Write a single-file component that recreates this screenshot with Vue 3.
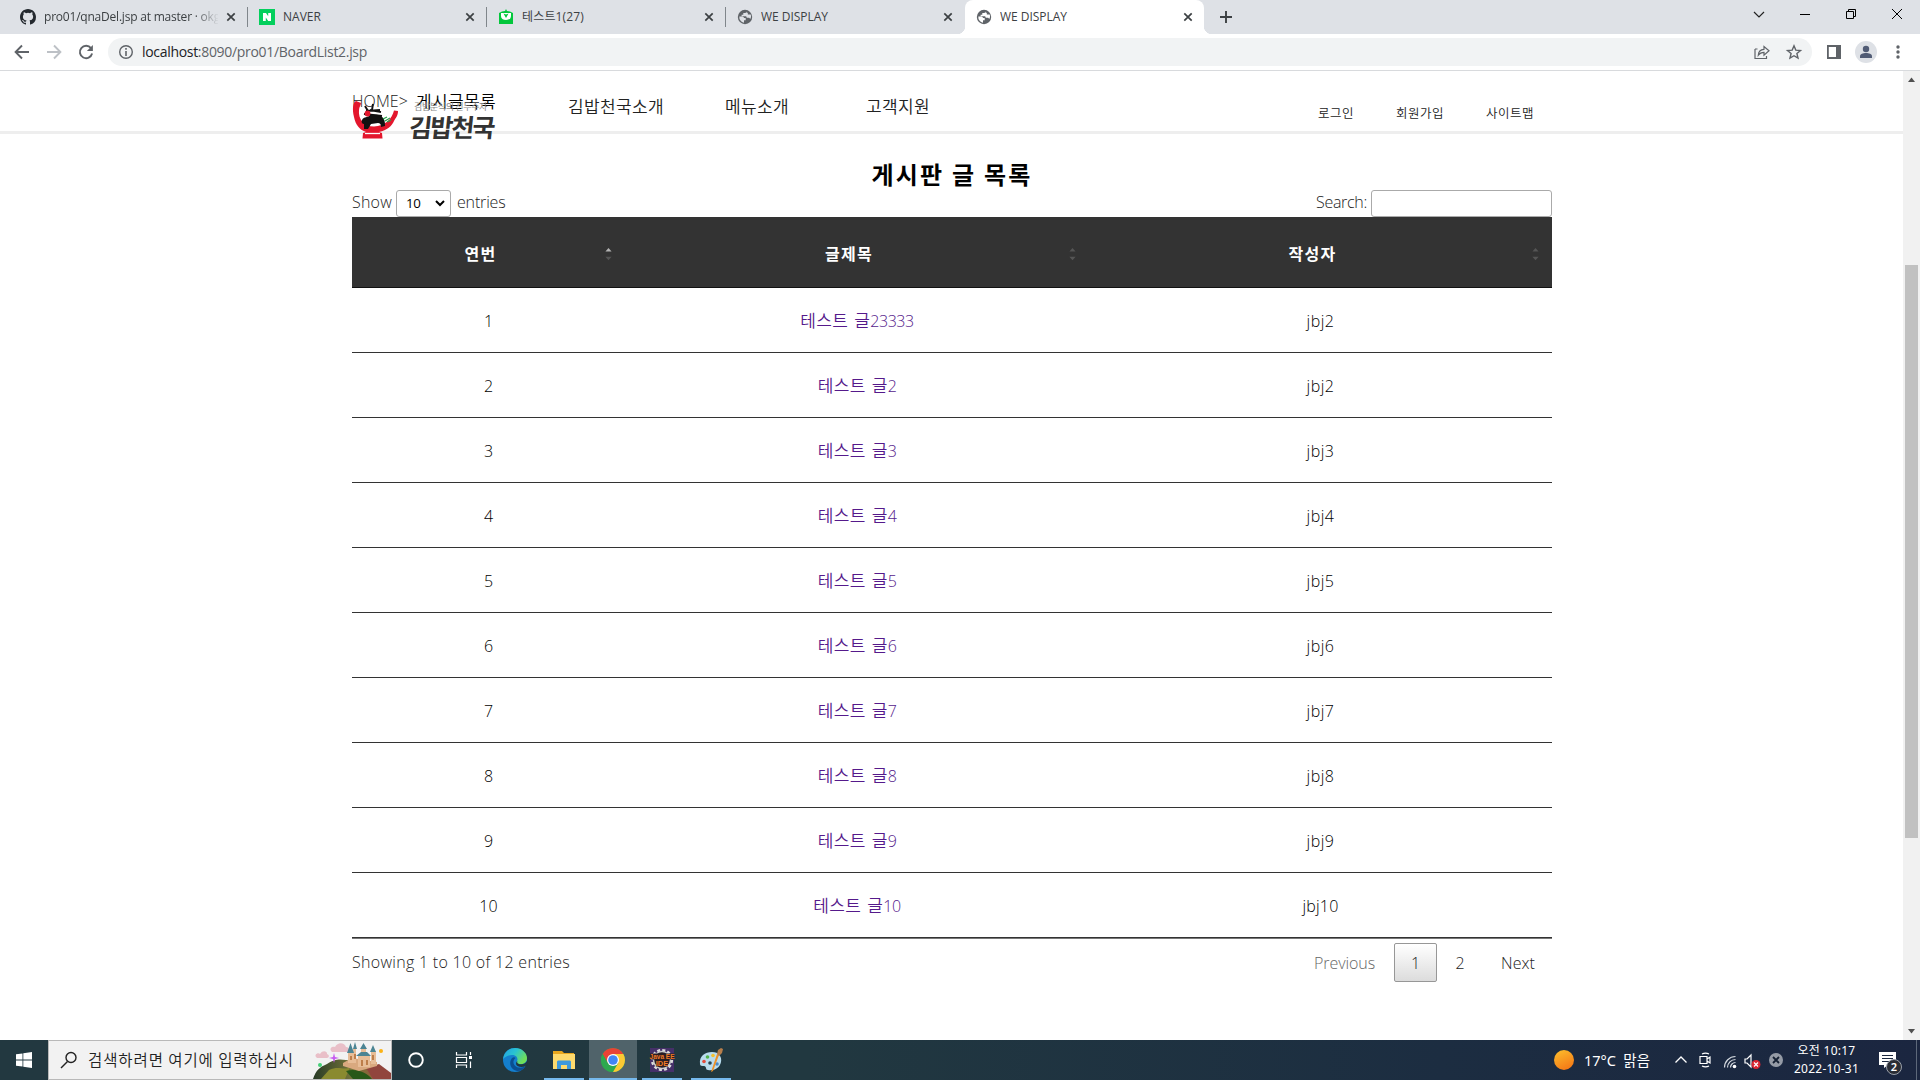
<script setup>
const tabs = [
  { icon: 'github', title: 'pro01/qnaDel.jsp at master · okg', w: 176, fade: true },
  { icon: 'naver', title: 'NAVER', w: 38 },
  { icon: 'mail', title: '테스트1(27)', w: 62 },
  { icon: 'globe', title: 'WE DISPLAY', w: 67 },
  { icon: 'globe', title: 'WE DISPLAY', w: 67, active: true },
]

const rows = [
  { no: 1, title: '23333', writer: 'jbj2' },
  { no: 2, title: '2', writer: 'jbj2' },
  { no: 3, title: '3', writer: 'jbj3' },
  { no: 4, title: '4', writer: 'jbj4' },
  { no: 5, title: '5', writer: 'jbj5' },
  { no: 6, title: '6', writer: 'jbj6' },
  { no: 7, title: '7', writer: 'jbj7' },
  { no: 8, title: '8', writer: 'jbj8' },
  { no: 9, title: '9', writer: 'jbj9' },
  { no: 10, title: '10', writer: 'jbj10' },
]

// Spreads or tightens the letters of a label so that it takes the given width.
const vFit = {
  mounted(el, { value }) {
    const range = document.createRange()
    range.selectNodeContents(el)
    const natural = range.getBoundingClientRect().width
    const count = el.textContent.length
    el.style.letterSpacing = `${(value - natural) / count}px`
  },
}
</script>

<template>
  <div class="screen">
    <div class="tabstrip">
      <div v-for="(t, i) in tabs" :key="i" class="tab" :class="{ active: t.active, next: i === 3 }">
        <svg v-if="t.icon === 'github'" class="fav" viewBox="0 0 16 16"><path fill="#24292f" d="M8 0C3.58 0 0 3.58 0 8c0 3.54 2.29 6.53 5.47 7.59.4.07.55-.17.55-.38 0-.19-.01-.82-.01-1.49-2.01.37-2.53-.49-2.69-.94-.09-.23-.48-.94-.82-1.13-.28-.15-.68-.52-.01-.53.63-.01 1.08.58 1.23.82.72 1.21 1.87.87 2.33.66.07-.52.28-.87.51-1.07-1.78-.2-3.64-.89-3.64-3.95 0-.87.31-1.59.82-2.15-.08-.2-.36-1.02.08-2.12 0 0 .67-.21 2.2.82a7.6 7.6 0 0 1 4 0c1.53-1.04 2.2-.82 2.2-.82.44 1.1.16 1.92.08 2.12.51.56.82 1.27.82 2.15 0 3.07-1.87 3.75-3.65 3.95.29.25.54.73.54 1.48 0 1.07-.01 1.93-.01 2.2 0 .21.15.46.55.38A8 8 0 0 0 16 8c0-4.42-3.58-8-8-8z" /></svg>
        <svg v-else-if="t.icon === 'naver'" class="fav" viewBox="0 0 16 16"><path fill="#03cf5d" d="M0 0h16v16H0z" /><path fill="#fff" d="M4 4h3l2.200 3.300V4H12v8H9.200L6.800 8.600V12H4z" /></svg>
        <svg v-else-if="t.icon === 'mail'" class="fav" viewBox="0 0 16 16"><path fill="#03c73c" d="M1 4l3-1.500L7 2l1-2 1 2 3 .5L15 4v11H1z" /><path fill="#fff" d="M3 4h10v3c0 2.500-2 4-5 4S3 9.500 3 7z" /><path fill="#03c73c" d="M5.500 4.500L8 9l2.500-4.500L8 5.500z" /></svg>
        <svg v-else class="fav" viewBox="0 0 16 16"><circle cx="8" cy="8" r="7.200" fill="#5f6368" /><path class="land" d="M2.300 7.400h2.900c1 0 1.800.8 1.800 1.700h1.700v2.200H7v2.500A6 6 0 0 1 2.300 7.400zM9.800 2.300c-.1 1-.8 1.700-1.700 1.700H6.300v1.800H4.600v1.500h3.800c1 0 1.300.7 1.300 1.500h1.800c.9 0 1.500.6 1.700 1.300.9-1.200 1.100-2.900.5-4.600h-2.900V3.800H9.800z" /></svg>
        <span class="title" :class="{ fade: t.fade }"><span v-fit="t.w">{{ t.title }}</span></span>
        <svg class="x" viewBox="0 0 10 10"><path d="M1.300 1.300l7.400 7.400M8.700 1.300L1.300 8.700" stroke="#3c4043" stroke-width="1.700" /></svg>
      </div>
      <svg class="plus" viewBox="0 0 12 12"><path d="M6 0v12M0 6h12" stroke="#3c4043" stroke-width="1.900" /></svg>
      <div class="winctl">
        <svg viewBox="0 0 12 12"><path d="M1 4l5 5 5-5" fill="none" stroke="#222" stroke-width="1.200" /></svg>
        <svg viewBox="0 0 12 12"><path d="M1 6.500h10" stroke="#000" /></svg>
        <svg viewBox="0 0 12 12"><path d="M1.500 3.500h7v7h-7zM3.500 3.500v-2h7v7h-2" fill="none" stroke="#000" /></svg>
        <svg viewBox="0 0 12 12"><path d="M1 1l10 10M11 1L1 11" stroke="#000" /></svg>
      </div>
    </div>

    <div class="toolbar">
      <svg class="tb" viewBox="0 0 16 16"><path d="M15 8H2M8 1.500L1.600 8 8 14.500" fill="none" stroke="#5f6368" stroke-width="1.900" /></svg>
      <svg class="tb" viewBox="0 0 16 16"><path d="M1 8h13M8 1.500L14.400 8 8 14.500" fill="none" stroke="#bdc1c6" stroke-width="1.900" /></svg>
      <svg class="tb" viewBox="0 0 16 16"><path d="M13 4.200A6.200 6.200 0 1 0 14.100 9.500" fill="none" stroke="#5f6368" stroke-width="1.900" /><path d="M14.900 1v6h-6z" fill="#5f6368" /></svg>
      <div class="omni">
        <svg class="info" viewBox="0 0 16 16"><circle cx="8" cy="8" r="6.300" fill="none" stroke="#5f6368" stroke-width="1.400" /><path d="M8 7v5M8 4v1.700" stroke="#5f6368" stroke-width="1.600" /></svg>
        <span v-fit="225" class="url"><b>localhost</b>:8090/pro01/BoardList2.jsp</span>
        <svg class="share" viewBox="0 0 16 16"><path d="M1 5v9.500h11.500V12M1 5h2.500" fill="none" stroke="#5f6368" stroke-width="1.200" /><path d="M4.300 11.200c.2-4 2.300-5.700 5.700-5.900V2.500l5 4.300-5 4.300V8.300c-2.500 0-4.200.7-5.700 2.900z" fill="none" stroke="#5f6368" stroke-width="1.200" /></svg>
        <svg class="star" viewBox="0 0 16 16"><path d="M8 1.800l1.800 4.300 4.700.4-3.600 3 1.100 4.600L8 11.700l-4 2.400 1.100-4.600-3.600-3 4.700-.4z" fill="none" stroke="#5f6368" stroke-width="1.400" /></svg>
      </div>
      <svg class="panel" viewBox="0 0 14 14"><path fill="#5f6368" fill-rule="evenodd" d="M0 0h14v14H0zM1.800 2v10H9V2z" /></svg>
      <svg class="avatar" viewBox="0 0 22 22"><circle cx="11" cy="11" r="11" fill="#dee1e6" /><circle cx="11" cy="8" r="3.200" fill="#515c75" /><path d="M5 17v-1.800c0-2 3-3.200 6-3.200s6 1.200 6 3.200V17z" fill="#515c75" /></svg>
      <svg class="dots" viewBox="0 0 4 14"><circle cx="2" cy="2" r="1.700" fill="#5f6368" /><circle cx="2" cy="7" r="1.700" fill="#5f6368" /><circle cx="2" cy="12" r="1.700" fill="#5f6368" /></svg>
    </div>

    <div class="viewport">
      <div class="page">
        <header class="site">
          <div class="brand">
            <div class="crumb"><span v-fit="56" class="home">HOME&gt;</span><span v-fit="80" class="here">게시글목록</span></div>
            <div class="logo">
              <svg class="bowl" viewBox="0 0 48 40">
                <path d="M4 1C1 2 0 9 2 17c1.500 8 6 13 12 15l-3 1-.5 5.500h20L30 33l-3-1c8-2 13-6 15-11 2-4 4-5 4-10l-4-.5C40 19 33 26 22 26.500 12 26.500 6 19 7 10c0-3 2-5 2-7z" fill="#e3172d" />
                <path d="M13 33.500h15" stroke="#fff" stroke-width="1.300" />
                <path d="M13 6l3 5m5-7l-1 6m-6 1l14-1M12 14l18 2M18 10l11 2" fill="none" stroke="#111" stroke-width="1.900" />
                <path d="M10 20c2-4 6-2 8-5 4 0 9-1 12 2 3 2 3 6 3 9l-4 1c0-3-1-4-3-4l-7 1-3 5h-4v-5c-2 0-3-2-2-4z" fill="#111" />
                <circle cx="15.500" cy="13.500" r="2.900" fill="#e3172d" />
                <path d="M31 19l4-2m-2 4l5-3m-3 4l4-2" stroke="#27a34a" stroke-width="1.300" />
              </svg>
              <div class="words"><small v-fit="73">김밥분식의 선두주자</small><strong v-fit="88">김밥천국</strong></div>
            </div>
          </div>
          <nav class="gnb"><a v-fit="96">김밥천국소개</a><a v-fit="64">메뉴소개</a><a v-fit="64">고객지원</a></nav>
          <nav class="util"><a v-fit="36">로그인</a><a v-fit="48">회원가입</a><a v-fit="48">사이트맵</a></nav>
        </header>

        <main>
          <h2><span v-fit="161">게시판 글 목록</span></h2>
          <div class="controls">
            <span v-fit="40" class="show">Show</span>
            <div class="select"><span v-fit="14.500">10</span><svg viewBox="0 0 10 7"><path d="M1 1l4 4 4-4" fill="none" stroke="#000" stroke-width="2" /></svg></div>
            <span v-fit="48.500" class="entries">entries</span>
            <span v-fit="51" class="search">Search:</span>
            <input type="text" />
          </div>
          <table>
            <colgroup><col class="c1" /><col class="c2" /><col class="c3" /></colgroup>
            <thead>
              <tr>
                <th v-for="(h, i) in ['연번', '글제목', '작성자']" :key="h">
                  <div class="th">
                    <span v-fit="h.length * 16">{{ h }}</span>
                    <svg class="sort" viewBox="0 0 8 14"><path d="M4 0l3.500 4h-7z" :fill="i === 0 ? '#b4b4b4' : '#555'" /><path d="M4 14L.5 10h7z" fill="#555" /></svg>
                  </div>
                </th>
              </tr>
            </thead>
            <tbody>
              <tr v-for="r in rows" :key="r.no">
                <td>{{ r.no }}</td>
                <td><a><span v-fit="48" class="ko">테스트</span><span v-fit="16" class="ko gap">글</span><span v-fit="r.title.length * 8.700">{{ r.title }}</span></a></td>
                <td><span v-fit="r.no === 10 ? 36 : 28">{{ r.writer }}</span></td>
              </tr>
            </tbody>
          </table>
          <div class="foot">
            <span v-fit="218" class="info-line">Showing 1 to 10 of 12 entries</span>
            <div class="pager"><span v-fit="61" class="prev">Previous</span><span class="cur">1</span><span class="two">2</span><span v-fit="34" class="nextp">Next</span></div>
          </div>
        </main>
      </div>
      <div class="scroll">
        <svg viewBox="0 0 17 17"><path d="M8.500 6.500l3.500 4.500H5z" fill="#505050" /></svg>
        <div class="thumb"></div>
        <svg class="down" viewBox="0 0 17 17"><path d="M8.500 10.500L12 6H5z" fill="#505050" /></svg>
      </div>
    </div>

    <div class="taskbar">
      <div class="start"><svg viewBox="0 0 16 16"><path fill="#fff" d="M0 2.300l6.500-.9v6.200H0zM7.300 1.300L16 0v7.600H7.300zM0 8.400h6.500v6.200L0 13.700zM7.300 8.400H16V16l-8.700-1.300z" /></svg></div>
      <div class="find">
        <svg class="glass" viewBox="0 0 18 18"><circle cx="11" cy="6.500" r="5" fill="none" stroke="#222" stroke-width="1.400" /><path d="M7.500 10.500L1 17" stroke="#222" stroke-width="1.400" /></svg>
        <span v-fit="206">검색하려면 여기에 입력하십시</span>
        <svg class="castle" viewBox="0 0 78 38">
          <defs><linearGradient id="hill"><stop offset="0" stop-color="#283a25" /><stop offset=".5" stop-color="#74743a" /><stop offset="1" stop-color="#a6513c" /></linearGradient></defs>
          <path d="M4 17c-4-3 1-6 3-4 3-5 8-2 7 0 3 1 2 4 0 4zM19 11c-4-4 1-6 3-5 3-6 10-4 11 0 4 0 4 5 1 5z" fill="#e9bfc8" />
          <path d="M0 38c3-9 7-12 14-15 8-5 12-5 19-4 14 1 32 6 45 14v5z" fill="url(#hill)" />
          <path d="M53 27l13-4 12 9v6H60z" fill="#91453d" /><path d="M16 29c10-5 15 1 21-3l-5 12H8z" fill="#8a8a30" /><path d="M33 30c10-3 20 1 26 8H40z" fill="#275818" />
          <path d="M30 22l9-5 25 4v4l-18 5-16-5z" fill="#d9a97f" /><path d="M35 11h6v11h-6zM40 8h3v14h-3zM45 14h12v12H45zM58 10h5v13h-5zM48 8h5v8h-5z" fill="#e7bd97" />
          <path d="M34 12l3.500-10L41 12zM40 8l2-7 2 7zM47 8l3.500-6L54 8zM57 11l3-7 3 7zM43 15l5-4h6l4 4z" fill="#4b8493" />
          <path d="M38 15v4M42 13v5M49 19v6M54 19v5M60 14v5" stroke="#b06a32" stroke-width="1.500" />
          <path d="M21 12l1 4 4 1-4 1-1 4-1-4-4-1 4-1z" fill="#c65cf1" /><circle cx="7" cy="24" r="2" fill="#44cf77" /><circle cx="68" cy="10" r="2" fill="#fbb316" />
        </svg>
      </div>
      <div class="app"><svg viewBox="0 0 24 24"><circle cx="12" cy="12" r="6.800" fill="none" stroke="#fff" stroke-width="1.900" /></svg></div>
      <div class="app"><svg viewBox="0 0 24 24"><path d="M4.500 4v3h10V4M4.500 20v-3h10v3M4.500 9.500h10v5h-10zM18.500 4v3M18.500 13.500V20" fill="none" stroke="#fff" stroke-width="1.200" /><path d="M17 8h3v3h-3z" fill="#fff" /></svg></div>
      <div class="app edge">
        <svg viewBox="0 0 24 24">
          <defs><linearGradient id="eg" x2="1" y2=".5"><stop stop-color="#229ee5" /><stop offset=".5" stop-color="#29c3d2" /><stop offset="1" stop-color="#70df58" /></linearGradient></defs>
          <circle cx="12" cy="12" r="12" fill="#147fce" />
          <path d="M0 11C1 4 6 0 12 0c7 0 12 5 12 10 0 4-3 6-6 6-3 0-5-1-4-3 1-1 1-6-5-6-4 0-7 2-9 4z" fill="url(#eg)" />
          <path d="M9 10c-4 5-1 12 5 13 4 .3 7-2 8.500-5-4 3-11 2-12-3-.3-2 .5-4 2-5-1-1-2-1-3.500 0z" fill="#0b4e91" />
          <path d="M24.500 12c-1 3-4 4.500-7 4.300-2 0-4-1-3-3.300-2 1-2 4 0 5 3 1.500 6 1 8.500-.3L25 19z" fill="#203740" />
        </svg>
      </div>
      <div class="app run exp"><svg viewBox="0 0 24 24"><path d="M1 3h9l2 2h10v16H1z" fill="#eaa71e" /><path d="M1 6h22v15H1z" fill="#ffda6d" /><path d="M5 21v-7c0-1 .7-1.500 1.500-1.500h11c.8 0 1.500.5 1.500 1.500v7h-4v-4H9v4z" fill="#3f99dd" /></svg></div>
      <div class="app run chrome">
        <svg viewBox="0 0 24 24"><circle cx="12" cy="12" r="12" fill="#2da94f" /><path d="M12 12L1.610 6A12 12 0 0 1 22.390 6z" fill="#e94235" /><path d="M12 6h10.390A12 12 0 0 1 12 24l5.200-9z" fill="#fcc934" /><path d="M1.610 6L6.800 15 12 12V6z" fill="#e94235" /><path d="M1.610 6L6.800 15l5.200 3-2 6A12 12 0 0 1 1.610 6z" fill="#2da94f" /><circle cx="12" cy="12" r="6" fill="#fff" /><circle cx="12" cy="12" r="4.800" fill="#4285f4" /></svg>
      </div>
      <div class="app run java">
        <svg viewBox="0 0 24 24"><path d="M0 0h24v24H0z" fill="#453069" /><circle cx="12" cy="12" r="9.800" fill="none" stroke="#ddd" stroke-width="2.600" stroke-dasharray="3 2.130" /><circle cx="12" cy="12" r="8.500" fill="#241c28" stroke="#ccc" stroke-width="1.500" /><path d="M0 5.500h24v6H0zM6 11.500h12v7H6z" fill="#2a1d22" /><text x="12" y="11.200" font-size="6.500">Java EE</text><text x="12" y="18" font-size="7.500">IDE</text></svg>
      </div>
      <div class="app run paint">
        <svg viewBox="0 0 24 24"><path d="M1 16C0 8 6 4 13 4c7 0 10 5 9 10-1 6-7 9-13 8-3 0-1-4-4-4-2 0-4 0-4-2z" fill="#b9dcee" /><circle cx="5" cy="13.500" r="1.800" fill="#e44c3d" /><circle cx="8.500" cy="9" r="1.800" fill="#52b54b" /><circle cx="14" cy="7.500" r="1.800" fill="#f6c02d" /><circle cx="11" cy="15" r="1.800" fill="#28414c" /><circle cx="18" cy="16" r="1.800" fill="#4889c8" /><path d="M20 7l-6 16-2 1 1-3 5-15z" fill="#ee9128" /><path d="M18 6l1-4 3-2 2 1-1 4-3 3z" fill="#b77e4b" /></svg>
      </div>
      <div class="tray">
        <div class="sun"></div>
        <span v-fit="66" class="temp">17°C&nbsp; 맑음</span>
        <svg class="t1" viewBox="0 0 14 14"><path d="M1.500 9.500L7 4l5.500 5.500" fill="none" stroke="#fff" stroke-width="1.300" /></svg>
        <svg class="t2" viewBox="0 0 16 16"><path d="M3 4.500h7v7H3zM10 7l3-2v6l-3-2M5 2c2-1 5-1 7 0M5 14c2 1 5 1 7 0" fill="none" stroke="#fff" stroke-width="1.200" /></svg>
        <svg class="t3" viewBox="0 0 14 14"><path d="M1.500 12.500a11 11 0 0 1 11-11M4.500 12.500a8 8 0 0 1 8-8M7.500 12.500a5 5 0 0 1 5-5" fill="none" stroke="#d5dae0" stroke-width="1.200" /><circle cx="11.500" cy="11.500" r="1.800" fill="#fff" /></svg>
        <svg class="t4" viewBox="0 0 17 15"><path d="M1 5h2l4-4v12L3 9H1z" fill="none" stroke="#fff" stroke-width="1.200" /><circle cx="12" cy="10.500" r="4.500" fill="#d92632" /><path d="M10 8.500l4 4m0-4l-4 4" stroke="#fff" stroke-width="1.200" /></svg>
        <svg class="t5" viewBox="0 0 14 14"><circle cx="7" cy="7" r="7" fill="#959ba6" /><path d="M4 4l6 6m0-6l-6 6" stroke="#152033" stroke-width="1.800" /></svg>
        <div class="clock"><span v-fit="58">오전 10:17</span><span v-fit="65">2022-10-31</span></div>
        <div class="noti">
          <svg viewBox="0 0 17 16"><path d="M0 0h17v13H9l-4 3v-3H0z" fill="#fff" /><path d="M3 3.500h11M3 6.500h11M3 9.500h7" stroke="#1b2840" /></svg>
          <span class="badge">2</span>
        </div>
      </div>
    </div>
  </div>
</template>

<style>
body { overflow: hidden; background: #fff; }
</style>

<style scoped>
.screen { width: 1920px; height: 1080px; display: flex; flex-direction: column; overflow: hidden; background: #fff; font-family: "Open Sans", "Noto Sans CJK KR", sans-serif; font-weight: 350; font-size: 16px; color: #000; white-space: nowrap; }
svg { display: block; flex: none; overflow: visible; }
.tabstrip { height: 34px; flex: none; background: #dee1e6; display: flex; padding-left: 8px; box-sizing: border-box; }
.tab { width: 239px; height: 34px; box-sizing: border-box; padding: 0 11px 6px 12px; display: flex; align-items: center; font-size: 12px; font-weight: 400; color: #3c4043; position: relative; }
.tab::after { content: ""; position: absolute; right: -1px; top: 7px; width: 1px; height: 20px; background: #80868b; }
.tab.next::after, .tab.active::after { display: none; }
.tab.active { background: #fff; border-radius: 8px 8px 0 0; margin-left: 1px; padding-left: 11px; }
.tab.active::before { content: ""; position: absolute; left: -8px; right: -8px; bottom: 0; height: 8px; background: radial-gradient(circle at 0 0, transparent 8px, #fff 8.5px) left / 8px 8px no-repeat, radial-gradient(circle at 100% 0, transparent 8px, #fff 8.5px) right / 8px 8px no-repeat; }
.fav { width: 16px; height: 16px; margin-top: 6px; }
.land { fill: #dee1e6; }
.active .land { fill: #fff; }
.title { width: 176px; margin-left: 8px; margin-top: 5px; overflow: hidden; line-height: 20px; }
.fade { -webkit-mask-image: linear-gradient(90deg, #000 150px, transparent 175px); mask-image: linear-gradient(90deg, #000 150px, transparent 175px); }
.x { width: 10px; height: 10px; margin: 6px 0 0 8px; }
.active .x { margin-left: 8px; }
.plus { width: 12px; height: 12px; margin: 11px 0 0 16px; }
.winctl { display: flex; gap: 34px; margin: 8px 17px 0 auto; }
.winctl svg { width: 12px; height: 12px; }
.toolbar { height: 37px; flex: none; box-sizing: border-box; border-bottom: 1px solid #d8dadd; display: flex; align-items: center; padding-left: 14px; }
.tb { width: 16px; height: 16px; margin-right: 16px; }
.omni { margin-left: -2px; width: 1704px; height: 28px; border-radius: 14px; background: #f1f3f4; display: flex; align-items: center; box-sizing: border-box; padding-left: 10px; }
.info { width: 16px; height: 16px; }
.url { margin-left: 8px; margin-top: -2px; font-size: 14px; font-weight: 400; color: #5f6368; }
.url b { font-weight: 400; color: #202124; }
.share { width: 16px; height: 16px; margin-left: auto; }
.star { width: 16px; height: 16px; margin: 0 10px 0 16px; }
.panel { width: 14px; height: 14px; margin-left: 15px; }
.avatar { width: 22px; height: 22px; margin-left: 14px; }
.dots { width: 4px; height: 14px; margin-left: 19px; }
.viewport { height: 969px; flex: none; display: flex; }
.page { flex: 1; }
.scroll { width: 17px; background: #f1f1f1; display: flex; flex-direction: column; }
.scroll svg { width: 17px; height: 17px; }
.thumb { width: 13px; height: 573px; margin: 177px auto 0 2px; background: #c1c1c1; }
.scroll .down { margin-top: auto; }
.site { height: 63px; box-sizing: border-box; border-bottom: 3px solid #eee; padding-left: 352px; display: flex; color: #222; }
.brand { width: 216px; position: relative; }
.crumb { display: flex; gap: 8px; padding-top: 19px; line-height: 22px; color: #000; }
.home { color: #222; }
.here, .gnb, .util, .ko { font-family: "Noto Sans CJK KR", sans-serif; }
.here, .gnb, .ko { font-size: 17px; }
.logo { position: absolute; left: 0; top: 29px; display: flex; }
.bowl { width: 48px; height: 40px; }
.words { margin-left: 8px; display: flex; flex-direction: column; font-family: "Noto Sans CJK KR", sans-serif; }
.words small { font-size: 9px; font-weight: 400; line-height: 10px; padding: 2px 0 0 6px; color: #888; }
.words strong { font-size: 25px; font-weight: 700; line-height: 28px; color: #333; transform: skewX(-6deg); transform-origin: bottom; }
.gnb { display: flex; line-height: 24px; padding-top: 23px; width: 750px; }
.gnb a:nth-child(2) { margin-left: 61px; }
.gnb a:nth-child(3) { margin-left: 77px; }
.util { display: flex; font-size: 12.5px; line-height: 18px; padding-top: 33px; gap: 42px; }
main { width: 1200px; margin-left: 352px; display: flex; flex-direction: column; }
h2 { margin: 22px 0 0; height: 34px; text-align: center; font: 700 24px/35px "Noto Sans CJK KR", sans-serif; }
.controls { height: 27px; display: flex; align-items: center; color: #222; line-height: 24px; }
.show, .entries, .search { margin-top: -3px; }
.select { width: 55px; height: 27px; box-sizing: border-box; border: 1px solid #aaa; border-radius: 3px; margin: 0 6px 0 4px; padding: 0 5px 0 9px; display: flex; align-items: center; justify-content: space-between; color: #000; font-size: 13.3px; font-weight: 400; }
.select span { margin-top: -1px; }
.select svg { width: 10px; height: 7px; }
.search { margin-left: auto; }
input { width: 181px; height: 27px; box-sizing: border-box; border: 1px solid #aaa; border-radius: 3px; background: transparent; margin-left: 4px; }
table { width: 1200px; border-collapse: separate; border-spacing: 0; table-layout: fixed; border-bottom: 1px solid #777; }
.c1 { width: 273px; }
.c2 { width: 464px; }
.c3 { width: 463px; }
th { height: 71px; box-sizing: border-box; background: #333; border-bottom: 1px solid #111; padding: 0; color: #fff; font: 700 16px/24px "Noto Sans CJK KR", sans-serif; }
.th { display: flex; justify-content: center; align-items: center; position: relative; padding: 2px 16px 0 0; }
.sort { position: absolute; right: 13px; top: 8px; width: 7px; height: 14px; }
td { height: 65px; box-sizing: border-box; padding: 1px 0 0; text-align: center; border-bottom: 1px solid #333; line-height: 24px; }
td a { display: inline-flex; align-items: baseline; color: #551a8b; }
.gap { margin-left: 6px; }
.foot { display: flex; height: 47px; align-items: center; justify-content: space-between; color: #222; }
.info-line { margin-top: -1px; }
.pager { display: flex; align-items: center; padding: 0 17px 0 0; }
.prev { color: #666; }
.cur { width: 43px; height: 39px; line-height: 38px; box-sizing: border-box; text-align: center; border: 1px solid #979797; border-radius: 2px; background: linear-gradient(#fff, #dcdcdc); margin-left: 19px; }
.two { width: 46px; text-align: center; }
.nextp { margin-left: 18px; }
.taskbar { height: 40px; flex: none; display: flex; background: linear-gradient(90deg, #223840 0%, #213840 42%, #1c2d41 75%, #1b2640 100%); color: #fff; position: relative; }
.start { width: 48px; display: flex; align-items: center; justify-content: center; }
.start svg { width: 16px; height: 16px; }
.find { width: 344px; box-sizing: border-box; border: 1px solid #b9b9b9; background: #f2f2f2; display: flex; align-items: center; padding-left: 11px; color: #222; font: 350 15.5px/24px "Noto Sans CJK KR", sans-serif; }
.glass { width: 18px; height: 18px; }
.find span { width: 206px; margin-left: 10px; margin-top: -2px; }
.castle { width: 78px; height: 38px; margin-left: auto; overflow: hidden; }
.app { width: 48px; display: flex; align-items: center; justify-content: center; position: relative; margin-right: 1px; }
.app:nth-child(3), .app:nth-child(4) { margin-right: 0; }
.app svg { width: 24px; height: 24px; }
.edge { margin-left: 3px; }
.run::after { content: ""; position: absolute; left: 4px; right: 4px; bottom: 0; height: 2px; background: #76b9ed; }
.chrome { background: #50636a; }
.chrome::after { left: 0; right: 0; }
.java text { fill: #f07b26; font-family: "Liberation Sans", sans-serif; font-weight: 700; text-anchor: middle; }
.tray { margin-left: auto; width: 366px; display: flex; align-items: center; border-right: 1px solid #5d687a; margin-right: 3px; font-family: "Noto Sans", "Noto Sans CJK KR", sans-serif; font-weight: 400; }
.sun { width: 20px; height: 20px; border-radius: 50%; background: linear-gradient(155deg, #fcc02d, #f36f13); flex: none; margin-left: 4px; }
.temp { width: 66px; margin-left: 10px; font-size: 14.5px; font-weight: 400; flex: none; margin-top: -1px; }
.t1 { width: 14px; height: 14px; margin-left: 24px; }
.t2 { width: 16px; height: 16px; margin-left: 9px; }
.t3 { width: 14px; height: 14px; margin: 3px 0 0 10px; }
.t4 { width: 17px; height: 15px; margin: 2px 0 0 7px; }
.t5 { width: 14px; height: 14px; margin-left: 8px; }
.clock { display: flex; flex-direction: column; align-items: center; width: 67px; margin-left: 10px; font-size: 12px; line-height: 18px; flex: none; }
.noti { position: relative; margin-left: 19px; }
.noti svg { width: 17px; height: 16px; }
.badge { position: absolute; left: 7px; top: 7px; width: 16px; height: 16px; box-sizing: border-box; border: 1px solid #9aa0aa; border-radius: 50%; background: #2a2d35; font-size: 11px; line-height: 14px; text-align: center; font-weight: 600; }
</style>
